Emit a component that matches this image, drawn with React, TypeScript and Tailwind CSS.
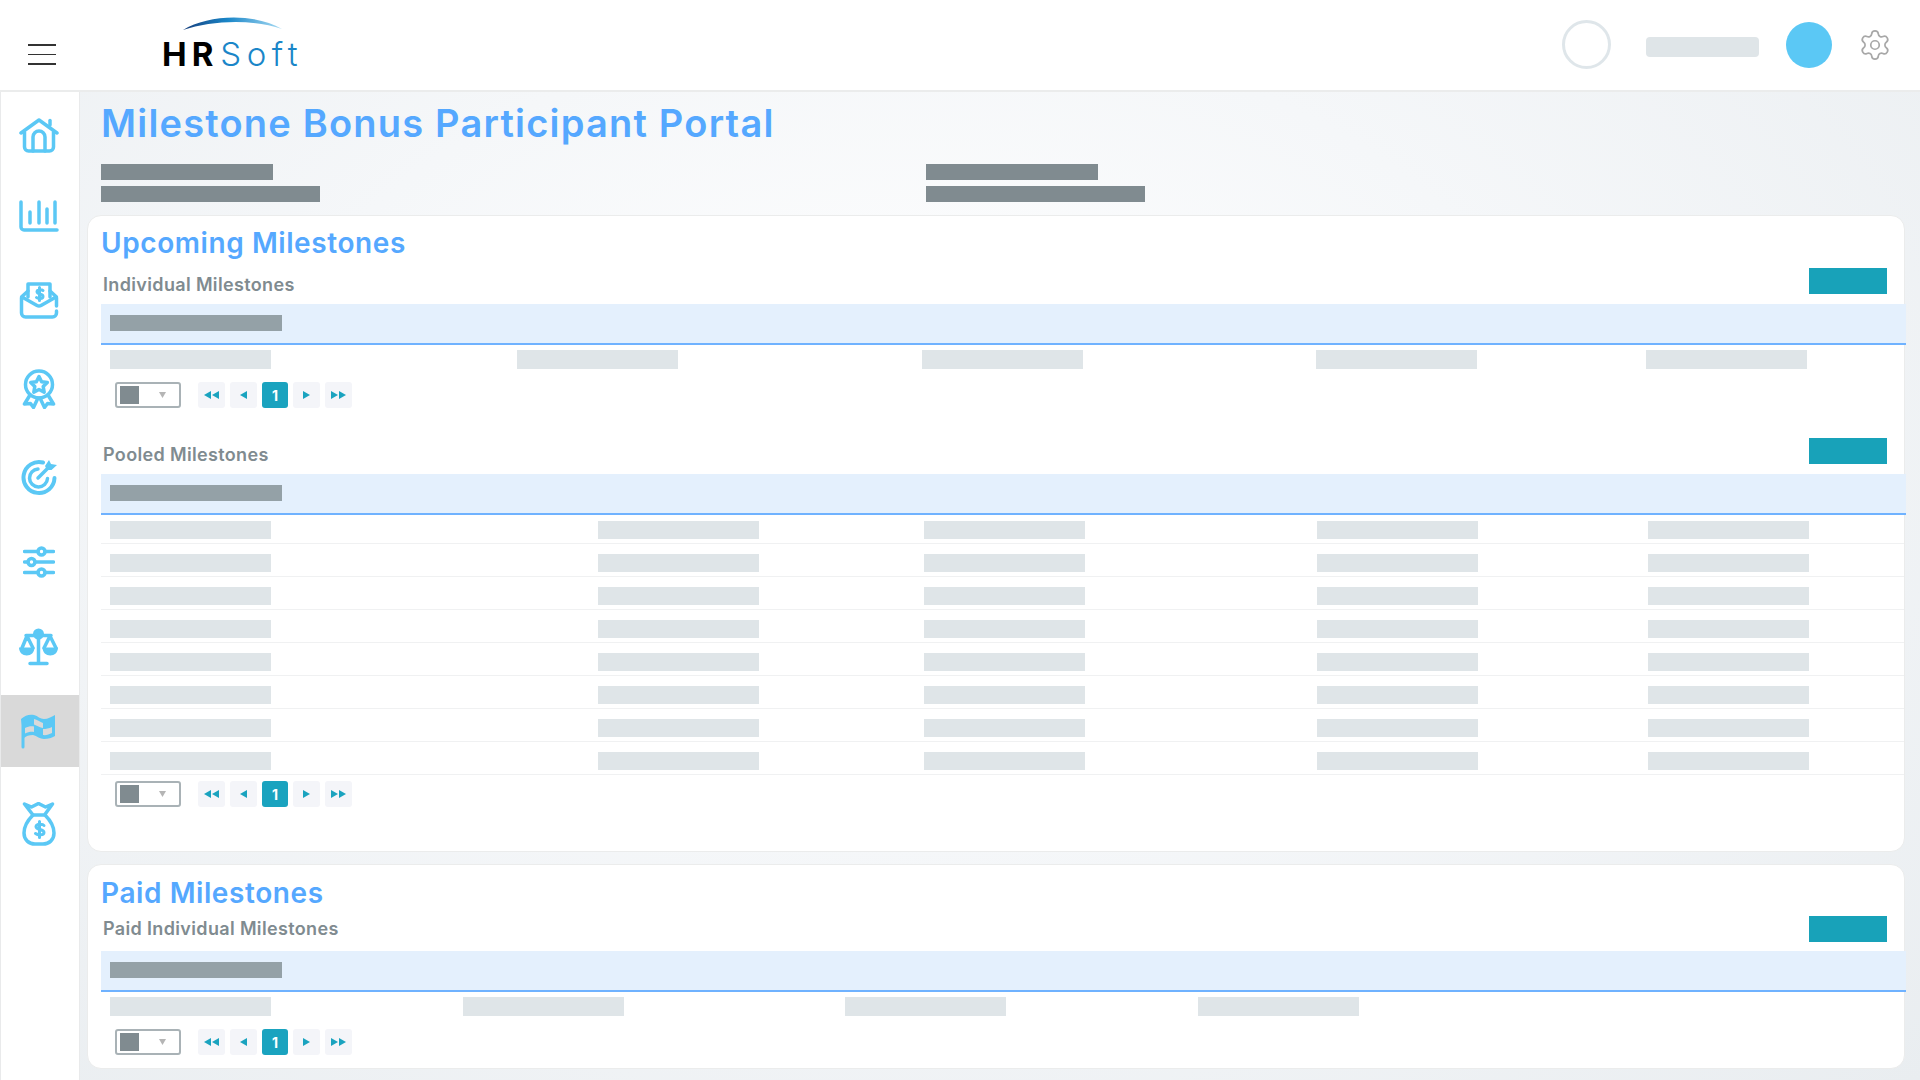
import type { ReactNode } from 'react'
import { Settings } from 'lucide-react'

const FONT = "font-['Inter','Noto_Sans',sans-serif]"

function Icon({ w, h, children }: { w: number; h: number; children: ReactNode }) {
  return (
    <svg
      width={w}
      height={h}
      viewBox={`0 0 ${w} ${h}`}
      fill="none"
      stroke="#5bc8f5"
      strokeWidth="3.5"
      strokeLinecap="round"
      strokeLinejoin="round"
    >
      {children}
    </svg>
  )
}

const HomeIcon = () => (
  <Icon w={40} h={35}>
    <path d="M2 15 20 2l18 13" />
    <path d="M31 7V2.500" />
    <path d="M5.500 14v15a4 4 0 0 0 4 4h21a4 4 0 0 0 4-4V14" />
    <path d="M14 33V19a6 6 0 0 1 12 0v14" />
  </Icon>
)

const ChartIcon = () => (
  <Icon w={40} h={32}>
    <path d="M2 2v25a3 3 0 0 0 3 3h33" />
    <path d="M11 12v11M20 2v21M28 9v14M36 2v21" />
  </Icon>
)

const EnvelopeIcon = () => (
  <Icon w={40} h={37}>
    <path d="M9 15V2h22v13" />
    <path d="M9 9 3 14.500a2 2 0 0 0-.5 1.500v15a4 4 0 0 0 4 4h27a4 4 0 0 0 4-4v-2" />
    <path d="M31 9l6 5.500a2 2 0 0 1 .5 1.500v8" />
    <path d="M3 15l15 8.500a4 4 0 0 0 4 0L37 15" />
    <path strokeWidth="3" d="M24 8.500c-1-1-5.500-1.500-6 1 0 3.500 6 1.500 6 5 0 2.500-5 2.500-6.500 1M20.500 5.500v13" />
  </Icon>
)

const MedalIcon = () => (
  <Icon w={34} h={40}>
    <circle cx="17" cy="15.500" r="13.500" />
    <path d="m17 7.500 2.600 5.200 5.700.8-4.100 4 1 5.700-5.200-2.700-5.200 2.700 1-5.700-4.100-4 5.700-.8z" />
    <path d="M8 26 2.500 35l6-.5 3 4 4.500-9.500" />
    <path d="m26 26 5.500 9-6-.5-3 4-4.500-9.500" />
  </Icon>
)

const TargetIcon = () => (
  <svg width="36" height="37" viewBox="0 0 36 37" fill="none" stroke="#5bc8f5" strokeLinecap="round">
    <path strokeWidth="4" d="M22 3.500A15.500 15.500 0 1 0 33.500 19" />
    <path strokeWidth="3.500" d="M17 10a9 9 0 1 0 9.500 9.500" />
    <path strokeWidth="3.500" d="m17 19 10-10" />
    <path fill="#5bc8f5" stroke="none" d="m24 7 4-6 2 4 6 1-5.500 5H26z" />
  </svg>
)

const SlidersIcon = () => (
  <Icon w={32} h={32}>
    <path d="M1.500 5.500H15M22 5.500h8.500M1.500 16H5M12 16h18.500M1.500 26.500H15M22 26.500h8.500" />
    <circle cx="18.500" cy="5.500" r="3.500" />
    <circle cx="8.500" cy="16" r="3.500" />
    <circle cx="18.500" cy="26.500" r="3.500" />
  </Icon>
)

const ScaleIcon = () => (
  <svg width="40" height="38" viewBox="0 0 40 38" fill="#5bc8f5" stroke="#5bc8f5" strokeLinecap="round" strokeLinejoin="round">
    <circle cx="19.500" cy="6" r="5.500" stroke="none" />
    <path fill="none" strokeWidth="3.500" d="M19.500 8v26M11 35.500h17M7 7.500h25M3 20 8 8l6 12M25 20l6-12 6 12" />
    <path stroke="none" d="M0 19.500h15.500c0 5-3.500 8-7.700 8S0 24.500 0 19.500zM23.500 19.500H39c0 5-3.500 8-7.700 8s-7.800-3-7.800-8z" />
  </svg>
)

const FlagIcon = () => (
  <svg width="35" height="35" viewBox="0 0 35 35" fill="#5bc8f5">
    <path d="M0 5C4 1 9 0 13 1c4 1 6 4 10 4 4 0 7-2 11-4v21c-3 2-7 3-11 3-4 0-7-3-11-4-4 0-7 1-9 3z" />
    <path fill="#d9d9d9" d="M13 5c3 .5 6 3 9 4v5c-3-.5-6-2.500-9-3.500z" />
    <path fill="#d9d9d9" d="M4 14c3-1.500 6-2 9-1.500v5.500c-3-.5-6 0-9 1.500z" />
    <path fill="#d9d9d9" d="M22 15c3 0 6-.5 9-2v6c-3 1.500-6 2.500-9 2z" />
    <path fill="none" stroke="#5bc8f5" strokeWidth="3" strokeLinecap="round" d="M2 6v27" />
  </svg>
)

const BagIcon = () => (
  <Icon w={34} h={44}>
    <path d="M11 13 2.500 2l7 3 7-3.500 7 3.500 7-3-8 11z" />
    <path d="M11 13C6 18 2 24 2 31c0 7 5 11 11 11h8c6 0 11-4 11-11 0-7-4-13-9-18" />
    <path strokeWidth="3" d="M22 23.500c-1-1.500-7.500-2-8 1 0 4 8 2 8 6 0 3-6 3-8.500 1M17.500 19.500v16" />
  </Icon>
)

const navItems = [
  { icon: <HomeIcon />, cls: 'h-[86px]' },
  { icon: <ChartIcon />, cls: 'h-[76px]' },
  { icon: <EnvelopeIcon />, cls: 'h-[92px]' },
  { icon: <MedalIcon />, cls: 'h-[86px]' },
  { icon: <TargetIcon />, cls: 'h-[90px]' },
  { icon: <SlidersIcon />, cls: 'h-[80px]' },
  { icon: <ScaleIcon />, cls: 'h-[90px]' },
  { icon: <FlagIcon />, cls: 'mt-[3px] h-[72px] bg-[#d9d9d9]' },
  { icon: <BagIcon />, cls: 'h-[114px]' },
]

function Sidebar() {
  return (
    <aside className="w-[80px] shrink-0 border-x border-[#e9eaeb] bg-white">
      {navItems.map((item, i) => (
        <div key={i} className={`flex items-center justify-center pr-[3px] ${item.cls}`}>
          {item.icon}
        </div>
      ))}
    </aside>
  )
}

function Logo() {
  return (
    <div className="relative ml-[107px] h-[90px] w-[140px]">
      <svg className="absolute left-[20px] top-[16px]" width="100" height="15" viewBox="0 0 100 15">
        <defs>
          <linearGradient id="arc" x1="0" x2="1" y1="0" y2="0">
            <stop offset="0" stopColor="#173f7d" />
            <stop offset="0.45" stopColor="#1a86c8" />
            <stop offset="1" stopColor="#a9dcf4" />
          </linearGradient>
        </defs>
        <path d="M0 14C26-2 72-3 99 13 70 3 30 4 0 14z" fill="url(#arc)" />
      </svg>
      <div className="absolute left-[-1px] top-[32px] flex items-baseline font-['Inter',sans-serif] text-[33px] leading-[44px]">
        <span className="font-bold tracking-[5px] text-black">HR</span>
        <span className="ml-[2px] font-light tracking-[5.5px] text-[#1a86c8]">Soft</span>
      </div>
    </div>
  )
}

function Header() {
  return (
    <header className="flex h-[92px] shrink-0 items-start border-b-2 border-[#ebecec] bg-white">
      <div className="ml-[28px] mt-[44px] flex w-[28px] flex-col gap-[8px]">
        <span className="h-[1.500px] bg-[#333]" />
        <span className="h-[1.500px] bg-[#333]" />
        <span className="h-[1.500px] bg-[#333]" />
      </div>
      <Logo />
      <div className="ml-auto flex items-center pr-[28px] pt-[20px]">
        <div className="h-[49px] w-[49px] rounded-full border-[3px] border-[#dfe6ea]" />
        <div className="ml-[35px] mt-[5px] h-[20px] w-[113px] rounded-[4px] bg-[#dfe5e8]" />
        <div className="ml-[27px] h-[46px] w-[46px] rounded-full bg-[#5bc8f5]" />
        <Settings size={34} strokeWidth={1.2} color="#a8a8a8" className="ml-[26px]" />
      </div>
    </header>
  )
}

function Triangle({ dir }: { dir: 'left' | 'right' }) {
  return (
    <svg width="7" height="8" viewBox="0 0 7 8" fill="#1aa3bf">
      <path d={dir === 'left' ? 'M7 0v8L0 4z' : 'M0 0v8l7-4z'} />
    </svg>
  )
}

function PageButton({ children }: { children: ReactNode }) {
  return (
    <div className="flex h-[26px] w-[27px] items-center justify-center gap-[1px] rounded-[3px] bg-[#f4f5f9]">{children}</div>
  )
}

function Pagination({ cls }: { cls: string }) {
  return (
    <div className={`flex items-center pl-[14px] ${cls}`}>
      <div className="relative mr-[17px] flex h-[26px] w-[66px] items-center rounded-[3px] border-2 border-[#a9b2b6] pl-[3px]">
        <span className="h-[18px] w-[19px] bg-[#808b90]" />
        <svg className="ml-[20px]" width="7" height="6" viewBox="0 0 7 6" fill="#b5b5b5">
          <path d="M0 0h7L3.500 6z" />
        </svg>
      </div>
      <div className="flex gap-[5px]">
        <PageButton>
          <Triangle dir="left" />
          <Triangle dir="left" />
        </PageButton>
        <PageButton>
          <Triangle dir="left" />
        </PageButton>
        <div className="flex h-[26px] w-[26px] items-center justify-center rounded-[3px] bg-[#1aa3bf] text-[14px] font-bold text-white">
          1
        </div>
        <PageButton>
          <Triangle dir="right" />
        </PageButton>
        <PageButton>
          <Triangle dir="right" />
          <Triangle dir="right" />
        </PageButton>
      </div>
    </div>
  )
}

function SectionHead({ label, cls, labelCls }: { label: string; cls: string; labelCls: string }) {
  return (
    <div className={`flex items-start justify-between pr-[17px] ${cls}`}>
      <span className={`pl-[2px] text-[18px] font-semibold leading-[22px] tracking-[0.35px] text-[#808b90] ${labelCls}`}>
        {label}
      </span>
      <span className="h-[26px] w-[78px] bg-[#18a2b9]" />
    </div>
  )
}

function TableHead() {
  return (
    <div className="-mr-[2px] h-[41px] border-b-2 border-[#6fb2ff] bg-[#e4f0fd] pl-[9px] pt-[11px]">
      <div className="h-[16px] w-[172px] bg-[#94a1a7]" />
    </div>
  )
}

function Cells({ count, cls }: { count: number; cls: string }) {
  return (
    <>
      {Array.from({ length: count }).map((_, i) => (
        <span key={i} className={`w-[161px] bg-[#dfe5e8] ${cls}`} />
      ))}
    </>
  )
}

function Card({ cls, children }: { cls: string; children: ReactNode }) {
  return (
    <section className={`ml-[7px] mr-[15px] rounded-[14px] border border-[#ebecec] bg-white pl-[13px] ${cls}`}>
      {children}
    </section>
  )
}

function CardTitle({ children }: { children: ReactNode }) {
  return (
    <h2 className="h-[36px] text-[28px] font-semibold leading-[36px] tracking-[0.58px] text-[#55a8ff]">{children}</h2>
  )
}

export default function App() {
  return (
    <div className={`flex h-[1080px] w-[1920px] flex-col overflow-hidden bg-white ${FONT}`}>
      <Header />
      <div className="flex min-h-0 flex-1">
        <Sidebar />
        <main className="min-w-0 flex-1 bg-[radial-gradient(ellipse_at_45%_35%,#ffffff_0%,#f5f7f9_45%,#e9edf0_100%)] pt-[8px]">
          <div className="pl-[21px]">
            <h1 className="h-[48px] text-[38px] font-semibold leading-[46px] tracking-[1.2px] text-[#55a8ff]">
              Milestone Bonus Participant Portal
            </h1>
            <div className="mt-[16px] grid grid-cols-[825px_1fr]">
              {[0, 1].map((i) => (
                <div key={i} className="flex flex-col gap-[6px]">
                  <span className="h-[16px] w-[172px] bg-[#808b90]" />
                  <span className="h-[16px] w-[219px] bg-[#808b90]" />
                </div>
              ))}
            </div>
          </div>

          <Card cls="mt-[13px] h-[637px] pt-[9px]">
            <CardTitle>Upcoming Milestones</CardTitle>
            <SectionHead label="Individual Milestones" cls="mt-[7px] h-[36px]" labelCls="mt-[6px]" />
            <TableHead />
            <div className="grid grid-cols-[407px_405px_394px_330px_1fr] pl-[9px] pt-[5px]">
              <Cells count={5} cls="h-[19px]" />
            </div>
            <Pagination cls="mt-[13px]" />

            <SectionHead label="Pooled Milestones" cls="mt-[30px] h-[36px]" labelCls="mt-[6px]" />
            <TableHead />
            {Array.from({ length: 8 }).map((_, i) => (
              <div
                key={i}
                className={`grid grid-cols-[488px_326px_393px_331px_1fr] items-end border-b border-[#f0f1f2] pb-[4px] pl-[9px] ${
                  i === 0 ? 'h-[29px]' : 'h-[33px]'
                }`}
              >
                <Cells count={5} cls="h-[18px]" />
              </div>
            ))}
            <Pagination cls="mt-[6px]" />
          </Card>

          <Card cls="mt-[12px] h-[205px] pt-[10px]">
            <CardTitle>Paid Milestones</CardTitle>
            <SectionHead label="Paid Individual Milestones" cls="mt-[5px] h-[35px]" labelCls="mt-[2px]" />
            <TableHead />
            <div className="grid grid-cols-[353px_382px_353px_1fr] pl-[9px] pt-[5px]">
              <Cells count={4} cls="h-[19px]" />
            </div>
            <Pagination cls="mt-[13px]" />
          </Card>
        </main>
      </div>
    </div>
  )
}
